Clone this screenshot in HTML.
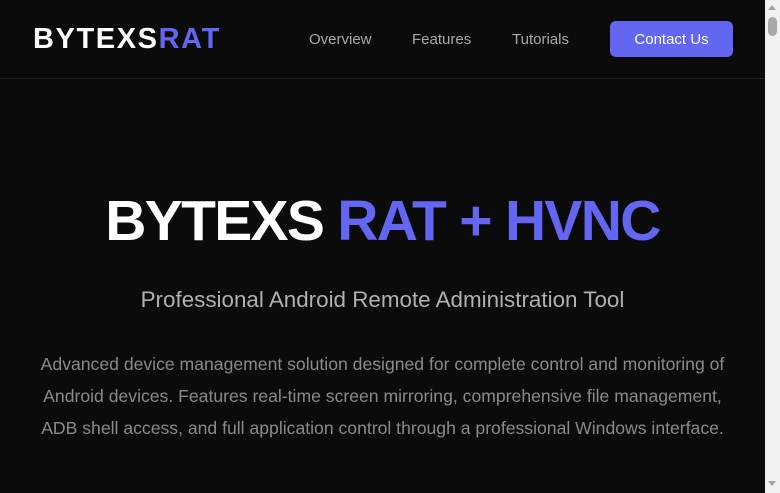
<!DOCTYPE html>
<html><head><style>
*{margin:0;padding:0;box-sizing:border-box}
html,body{width:780px;height:493px;overflow:hidden;background:#0b0b0b;font-family:"Liberation Sans",sans-serif}
.sb{position:absolute;right:0;top:0;width:15px;height:493px;background:#f1f1f1}
.sb .th{position:absolute;left:3px;top:17px;width:9px;height:19px;border-radius:5px;background:#a8a8a8}
.sb .u{position:absolute;left:3px;top:5px;border:4px solid transparent;border-bottom:5px solid #a3a3a3;border-top:0}
.sb .d{position:absolute;left:3px;bottom:7px;border:4px solid transparent;border-top:5px solid #a3a3a3;border-bottom:0}
header{position:absolute;left:0;top:0;width:765px;height:79px;border-bottom:1px solid #1e1e1e}
.logo{position:absolute;left:33px;top:23px;font-size:29px;font-weight:bold;color:#fff;letter-spacing:1.6px}
.p{color:#6366f1}
nav a{position:absolute;top:31px;font-size:15px;color:#a9a9a9;text-decoration:none}
.btn{position:absolute;left:610px;top:21px;width:123px;height:36px;border-radius:6px;background:#6366f1;color:#fff;font-size:15px;text-align:center;line-height:37px}
h1{position:absolute;left:0;width:765px;top:188px;text-align:center;font-size:57px;font-weight:bold;color:#fff;letter-spacing:-1.7px}
h2{position:absolute;left:0;width:765px;top:287px;text-align:center;font-size:22.4px;font-weight:normal;color:#b0b0b0}
p.d{position:absolute;left:32px;width:701px;top:348px;text-align:center;font-size:17.6px;line-height:32px;color:#8a8a8a}
</style></head><body>
<header>
<div class="logo">BYTEXS<span class="p">RAT</span></div>
<nav><a style="left:309px">Overview</a><a style="left:412px">Features</a><a style="left:512px">Tutorials</a></nav>
<div class="btn">Contact Us</div>
</header>
<h1>BYTEXS <span class="p">RAT + HVNC</span></h1>
<h2>Professional Android Remote Administration Tool</h2>
<p class="d">Advanced device management solution designed for complete control and monitoring of Android devices. Features real-time screen mirroring, comprehensive file management, ADB shell access, and full application control through a professional Windows interface.</p>
<div class="sb"><div class="u"></div><div class="th"></div><div class="d"></div></div>
</body></html>
